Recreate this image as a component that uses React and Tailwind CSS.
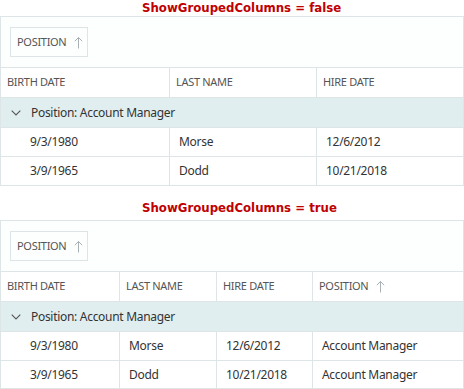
import React from "react";

const BORDER = "border-[#dde5e7]";

function UpArrow() {
  return (
    <svg width="9" height="13" viewBox="0 0 9 13" className="ml-[8px]" fill="none">
      <path d="M4.5 1.5V12.5M0.8 5.2L4.5 1.5L8.2 5.2" stroke="#a9b1b4" strokeWidth="1" />
    </svg>
  );
}

function Chevron() {
  return (
    <svg width="10" height="6" viewBox="0 0 10 6" fill="none">
      <path d="M0.7 0.7L5 5L9.3 0.7" stroke="#555" strokeWidth="1.1" />
    </svg>
  );
}

function Title({ children }) {
  return (
    <div
      className="pl-[142px] text-left text-[#c00000] font-bold text-[11.75px] leading-[16px] h-[16px]"
      style={{ fontFamily: "Tahoma, 'DejaVu Sans', sans-serif" }}
    >
      {children}
    </div>
  );
}

function GroupPanel() {
  return (
    <div className={`h-[51px] border-b ${BORDER} bg-[#fdfefe] flex items-center pl-[9px]`}>
      <div className={`h-[30px] w-[78px] border ${BORDER} flex items-center pl-[6px] text-[11px] text-[#555] tracking-[-0.3px]`}>
        POSITION
        <UpArrow />
      </div>
    </div>
  );
}

function Grid({ widths, headers, rows, sortLast, lastH }) {
  return (
    <div className={`border ${BORDER} w-[464px] text-[#333]`} style={{ fontFamily: "'Segoe UI', 'Noto Sans', sans-serif" }}>
      <GroupPanel />
      <div className={`flex h-[30px] border-b ${BORDER}`}>
        {headers.map((h, i) => (
          <div
            key={h}
            className={`flex items-center pl-[6px] text-[11px] text-[#555] tracking-[-0.3px] ${i < headers.length - 1 ? `border-r ${BORDER}` : "flex-1"}`}
            style={i < headers.length - 1 ? { width: widths[i] } : undefined}
          >
            {h}
            {sortLast && i === headers.length - 1 && <UpArrow />}
          </div>
        ))}
      </div>
      <div className={`flex items-center h-[30px] bg-[#e1eef0] border-b ${BORDER} pl-[10px] text-[12px] tracking-[-0.3px] text-[#333]`}>
        <Chevron />
        <span className="ml-[10px]">Position: Account Manager</span>
      </div>
      {rows.map((r, ri) => {
        const last = ri === rows.length - 1;
        return (
          <div
            key={ri}
            className={`flex text-[12px] tracking-[-0.3px] ${last ? "" : `border-b ${BORDER}`}`}
            style={{ height: last ? lastH : 29 }}
          >
            {r.map((c, i) => (
              <div
                key={i}
                className={`flex items-center ${i === 0 ? "pl-[29px]" : "pl-[9px]"} ${i < r.length - 1 ? `border-r ${BORDER}` : "flex-1"}`}
                style={i < r.length - 1 ? { width: widths[i] } : undefined}
              >
                {c}
              </div>
            ))}
          </div>
        );
      })}
    </div>
  );
}

export default function App() {
  return (
    <div className="w-[464px] h-[389px] bg-white overflow-hidden">
      <Title>ShowGroupedColumns = false</Title>
      <Grid
        widths={[169, 147]}
        headers={["BIRTH DATE", "LAST NAME", "HIRE DATE"]}
        lastH={28}
        rows={[
          ["9/3/1980", "Morse", "12/6/2012"],
          ["3/9/1965", "Dodd", "10/21/2018"],
        ]}
      />
      <div className="h-[14px]" />
      <div className="h-[20px]">
        <Title>ShowGroupedColumns = true</Title>
      </div>
      <Grid
        widths={[119, 97, 96]}
        headers={["BIRTH DATE", "LAST NAME", "HIRE DATE", "POSITION"]}
        sortLast
        lastH={27}
        rows={[
          ["9/3/1980", "Morse", "12/6/2012", "Account Manager"],
          ["3/9/1965", "Dodd", "10/21/2018", "Account Manager"],
        ]}
      />
    </div>
  );
}
